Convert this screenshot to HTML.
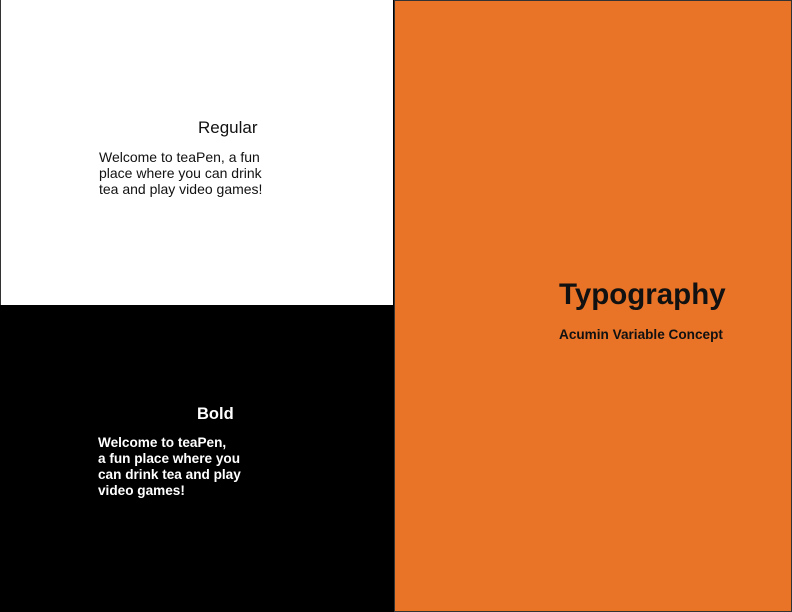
<!DOCTYPE html>
<html><head><meta charset="utf-8"><style>
html,body{margin:0;padding:0;width:792px;height:612px;overflow:hidden;background:#000;font-family:"Liberation Sans",sans-serif;}
.w{position:absolute;left:0;top:0;width:393px;height:305px;background:#fff;border-left:1px solid #333;box-sizing:border-box;}
.b{position:absolute;left:0;top:305px;width:394px;height:307px;background:#000;}
.o{position:absolute;left:394px;top:0;width:398px;height:612px;background:#e97428;border:1px solid #333;box-sizing:border-box;}
.t{position:absolute;white-space:nowrap;}
</style></head><body>
<div class="w">
<div class="t" style="left:197px;top:118px;font-size:17px;color:#111;">Regular</div>
<div class="t" style="left:98px;top:149px;font-size:14px;line-height:16px;color:#111;">Welcome to teaPen, a fun<br>place where you can drink<br>tea and play video games!</div>
</div>
<div class="b">
<div class="t" style="left:197px;top:100px;font-size:16.5px;font-weight:bold;color:#fff;">Bold</div>
<div class="t" style="left:98px;top:130px;font-size:13.6px;line-height:16px;font-weight:bold;color:#fff;">Welcome to teaPen,<br>a fun place where you<br>can drink tea and play<br>video games!</div>
</div>
<div class="o">
<div class="t" style="left:164px;top:277px;font-size:29.5px;font-weight:bold;color:#111;">Typography</div>
<div class="t" style="left:164px;top:326px;font-size:13.6px;font-weight:bold;color:#111;">Acumin Variable Concept</div>
</div>
</body></html>
